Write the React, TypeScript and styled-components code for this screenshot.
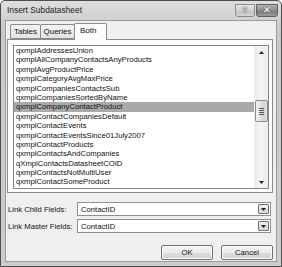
import React, { useState } from 'react';
import styled, { createGlobalStyle } from 'styled-components';

const GlobalStyle = createGlobalStyle`
    html, body {
        margin: 0;
        padding: 0;
        background: #ffffff;
    }
    * {
        box-sizing: border-box;
    }
`;

const FONT = `"Liberation Sans", Arial, sans-serif`;

const Window = styled.div`
    width: 282px;
    height: 267px;
    border: 1px solid #4d4d4d;
    border-radius: 5px 5px 0 0;
    background: linear-gradient(#dedede, #c9c9c9 30px, #cdcdcd);
    display: flex;
    flex-direction: column;
    font-family: ${FONT};
    color: #111;
    overflow: hidden;
`;

const TitleBar = styled.div`
    height: 19px;
    flex: none;
    display: flex;
    align-items: flex-start;
    justify-content: space-between;
    padding: 0 3px 0 6px;
`;

const Title = styled.span`
    font-size: 8.4px;
    line-height: 19px;
    color: #222;
`;

const CaptionButtons = styled.div`
    display: flex;
    gap: 1px;
    margin-top: 3px;
`;

const CaptionButton = styled.div<{ $close?: boolean }>`
    width: ${(p) => (p.$close ? 22 : 20)}px;
    height: 13px;
    border: 1px solid ${(p) => (p.$close ? '#5f5f5f' : '#8a8a8a')};
    border-radius: 0 0 3px 3px;
    background: ${(p) =>
        p.$close
            ? 'linear-gradient(#b4b4b4, #8c8c8c 50%, #7a7a7a 51%, #9a9a9a)'
            : 'linear-gradient(#e6e6e6, #cfcfcf 50%, #c1c1c1 51%, #d4d4d4)'};
    display: flex;
    align-items: center;
    justify-content: center;
    font-size: 9px;
    font-weight: bold;
    color: ${(p) => (p.$close ? '#f4f4f4' : '#e8e8e8')};
    text-shadow: 0 0 1px #333, 0 0 1px #333;
    line-height: 1;
`;

const Body = styled.div`
    flex: 1;
    margin: 0 4px 4px 4px;
    border: 1px solid #9a9a9a;
    background: #efefef;
    display: flex;
    flex-direction: column;
    padding: 2px 3px 0 0;
    font-size: 7.7px;
`;

const TabStrip = styled.div`
    height: 16px;
    display: flex;
    align-items: flex-end;
    padding-left: 4px;
    margin-left: 1px;
`;

const TabButton = styled.div<{ $active?: boolean; $width: number }>`
    width: ${(p) => p.$width}px;
    height: ${(p) => (p.$active ? 17 : 15)}px;
    margin-left: -1px;
    margin-bottom: ${(p) => (p.$active ? -1 : 0)}px;
    border: 1px solid #898c95;
    border-bottom: ${(p) => (p.$active ? 'none' : '1px solid #898c95')};
    border-radius: 2px 2px 0 0;
    background: ${(p) => (p.$active ? '#fcfcfc' : 'linear-gradient(#f4f4f4, #e3e3e3)')};
    display: flex;
    align-items: ${(p) => (p.$active ? 'flex-start' : 'center')};
    padding-top: ${(p) => (p.$active ? 2 : 0)}px;
    padding-left: ${(p) => (p.$active ? 5 : 0)}px;
    justify-content: ${(p) => (p.$active ? 'flex-start' : 'center')};
    position: relative;
    z-index: ${(p) => (p.$active ? 1 : 0)};
    font-size: 8px;
    cursor: default;
`;

const TabPanel = styled.div`
    margin-left: 1px;
    height: 154px;
    border: 1px solid #898c95;
    background: #fcfcfc;
    padding: 5px 3px 3px 5px;
    display: flex;
`;

const ListBox = styled.div`
    flex: 1;
    border: 1px solid #828790;
    background: #fff;
    display: flex;
`;

const Items = styled.div`
    flex: 1;
    padding-top: 0;
    overflow: hidden;
`;

const Item = styled.div<{ $selected?: boolean }>`
    height: 9.4px;
    line-height: 9.4px;
    padding-left: 2px;
    white-space: nowrap;
    background: ${(p) => (p.$selected ? '#a9a9a9' : 'transparent')};
    color: #111;
`;

const ScrollBar = styled.div`
    width: 14px;
    flex: none;
    background: linear-gradient(90deg, #e9e9e9, #f5f5f5 40%, #ececec);
    border-left: 1px solid #f0f0f0;
    display: flex;
    flex-direction: column;
    position: relative;
`;

const ScrollArrow = styled.div`
    height: 12px;
    display: flex;
    align-items: center;
    justify-content: center;
`;

const ScrollTrack = styled.div`
    flex: 1;
    position: relative;
`;

const Thumb = styled.div`
    position: absolute;
    left: 0;
    right: 0;
    top: 42px;
    height: 22px;
    border: 1px solid #8c8c8c;
    border-radius: 2px;
    background: linear-gradient(90deg, #f2f2f2, #e2e2e2 50%, #d4d4d4 51%, #dcdcdc);
    display: flex;
    flex-direction: column;
    align-items: center;
    justify-content: center;
    gap: 1px;
`;

const Grip = styled.div`
    width: 5px;
    height: 1px;
    background: #555;
`;

const Fields = styled.div`
    margin-top: 9px;
    display: flex;
    flex-direction: column;
    gap: 3px;
    padding-left: 2px;
`;

const FieldRow = styled.div`
    display: flex;
    align-items: center;
`;

const Label = styled.span`
    width: 69px;
    flex: none;
    font-size: 7.7px;
`;

const Combo = styled.div`
    width: 194px;
    height: 14px;
    border: 1px solid #8e8f8f;
    background: #fff;
    display: flex;
    align-items: center;
    padding: 1px;
`;

const ComboText = styled.span`
    flex: 1;
    padding-left: 2px;
    font-size: 7.7px;
`;

const ComboButton = styled.div`
    width: 11px;
    height: 10px;
    border: 1px solid #707070;
    border-radius: 1px;
    background: linear-gradient(#f2f2f2, #e4e4e4 50%, #d6d6d6 51%, #dedede);
    display: flex;
    align-items: center;
    justify-content: center;
`;

const ButtonRow = styled.div`
    margin-top: 12px;
    display: flex;
    justify-content: flex-end;
    gap: 8px;
`;

const PushButton = styled.div`
    width: 52px;
    height: 15px;
    border: 1px solid #707070;
    border-radius: 2px;
    background: linear-gradient(#f4f4f4, #ebebeb 50%, #dddddd 51%, #d3d3d3);
    box-shadow: inset 0 0 0 1px #fcfcfc;
    display: flex;
    align-items: center;
    justify-content: center;
    font-size: 7.7px;
`;

const Arrow = ({ up }: { up?: boolean }) => (
    <svg width="5" height="3" viewBox="0 0 5 3">
        <path d={up ? 'M0 3 L2.5 0 L5 3 Z' : 'M0 0 L5 0 L2.5 3 Z'} fill="#222" />
    </svg>
);

const queries = [
    'qxmplAddressesUnion',
    'qxmplAllCompanyContactsAnyProducts',
    'qxmplAvgProductPrice',
    'qxmplCategoryAvgMaxPrice',
    'qxmplCompaniesContactsSub',
    'qxmplCompaniesSortedByName',
    'qxmplCompanyContactProduct',
    'qxmplContactCompaniesDefault',
    'qxmplContactEvents',
    'qxmplContactEventsSince01July2007',
    'qxmplContactProducts',
    'qxmplContactsAndCompanies',
    'qXmplContactsDatasheetCOID',
    'qxmplContactsNotMultiUser',
    'qxmplContactSomeProduct',
];

const tabs = [
    { title: 'Tables', width: 31 },
    { title: 'Queries', width: 35 },
    { title: 'Both', width: 33 },
];

const App: React.FC = () => {
    const [activeTab, setActiveTab] = useState(2);
    const [selected, setSelected] = useState(6);
    return (
        <>
            <GlobalStyle />
            <Window>
                <TitleBar>
                    <Title>Insert Subdatasheet</Title>
                    <CaptionButtons>
                        <CaptionButton>?</CaptionButton>
                        <CaptionButton $close>✕</CaptionButton>
                    </CaptionButtons>
                </TitleBar>
                <Body>
                    <TabStrip>
                        {tabs.map((tab, index) => (
                            <TabButton
                                key={tab.title}
                                $width={tab.width}
                                $active={activeTab === index}
                                onClick={() => setActiveTab(index)}
                            >
                                {tab.title}
                            </TabButton>
                        ))}
                    </TabStrip>
                    <TabPanel>
                        <ListBox>
                            <Items>
                                {queries.map((name, index) => (
                                    <Item
                                        key={name}
                                        $selected={selected === index}
                                        onClick={() => setSelected(index)}
                                    >
                                        {name}
                                    </Item>
                                ))}
                            </Items>
                            <ScrollBar>
                                <ScrollArrow>
                                    <Arrow up />
                                </ScrollArrow>
                                <ScrollTrack>
                                    <Thumb>
                                        <Grip />
                                        <Grip />
                                        <Grip />
                                        <Grip />
                                    </Thumb>
                                </ScrollTrack>
                                <ScrollArrow>
                                    <Arrow />
                                </ScrollArrow>
                            </ScrollBar>
                        </ListBox>
                    </TabPanel>
                    <Fields>
                        <FieldRow>
                            <Label>Link Child Fields:</Label>
                            <Combo>
                                <ComboText>ContactID</ComboText>
                                <ComboButton>
                                    <Arrow />
                                </ComboButton>
                            </Combo>
                        </FieldRow>
                        <FieldRow>
                            <Label>Link Master Fields:</Label>
                            <Combo>
                                <ComboText>ContactID</ComboText>
                                <ComboButton>
                                    <Arrow />
                                </ComboButton>
                            </Combo>
                        </FieldRow>
                    </Fields>
                    <ButtonRow>
                        <PushButton>OK</PushButton>
                        <PushButton>Cancel</PushButton>
                    </ButtonRow>
                </Body>
            </Window>
        </>
    );
};

export default App;
